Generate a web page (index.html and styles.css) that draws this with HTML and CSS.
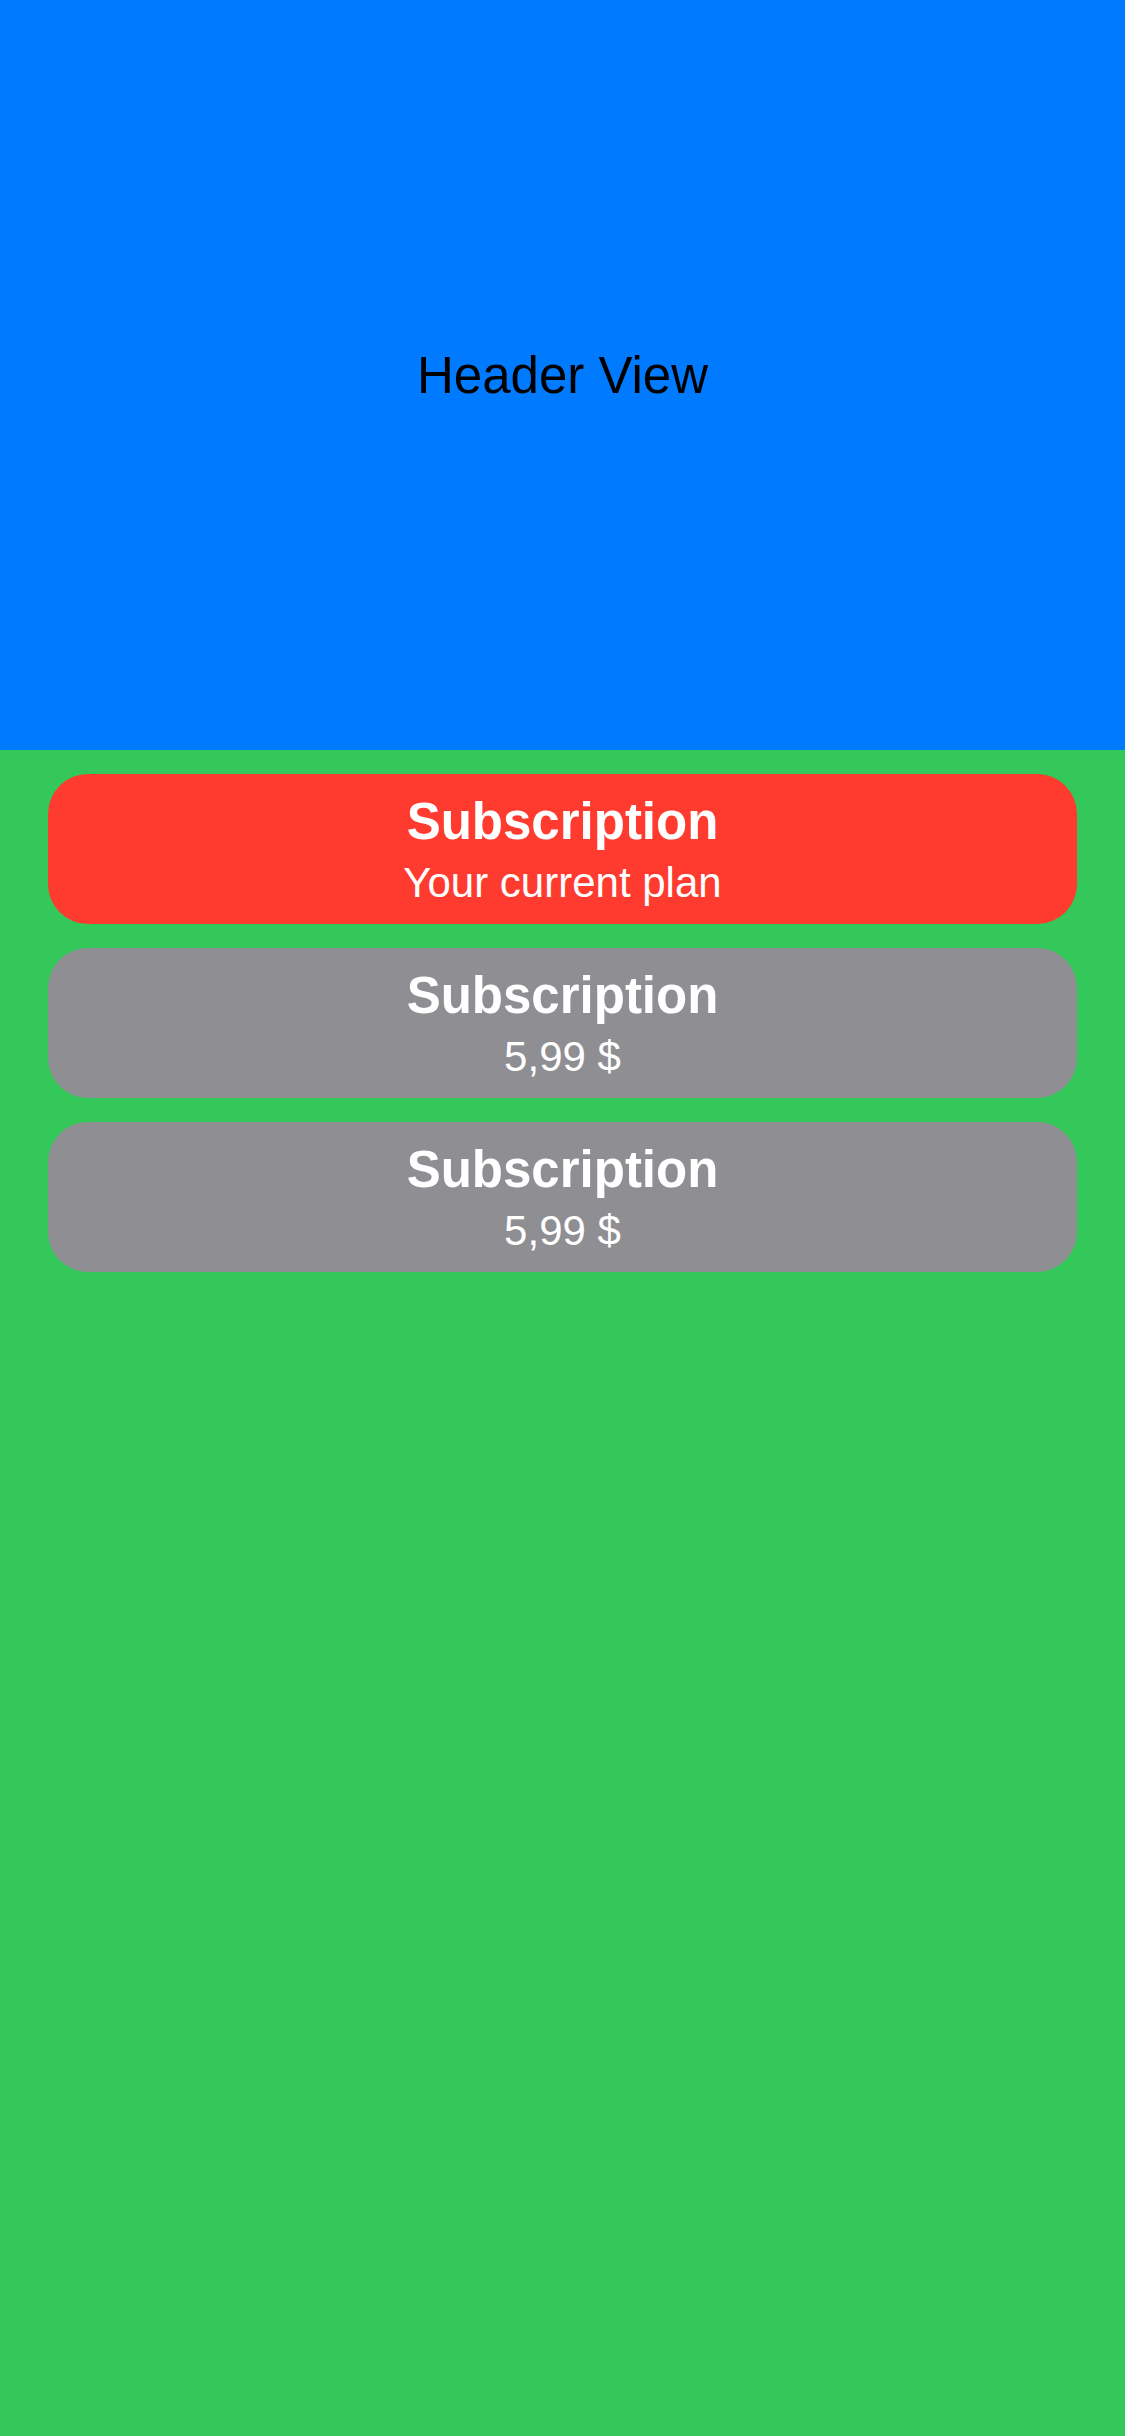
FILE: index.html
```html
<!DOCTYPE html>
<html lang="en">
<head>
<meta charset="utf-8">
<title>Subscriptions</title>
<link rel="stylesheet" href="styles.css">
</head>
<body>
<div class="screen">
  <header class="header">
    <span class="header-title">Header View</span>
  </header>
  <main class="plans">
    <div class="plan plan-current">
      <div class="plan-title">Subscription</div>
      <div class="plan-sub">Your current plan</div>
    </div>
    <div class="plan">
      <div class="plan-title">Subscription</div>
      <div class="plan-sub">5,99 $</div>
    </div>
    <div class="plan">
      <div class="plan-title">Subscription</div>
      <div class="plan-sub">5,99 $</div>
    </div>
  </main>
</div>
</body>
</html>
```
FILE: styles.css
```css
html, body {
  margin: 0;
  padding: 0;
}
body {
  background: #34c759;
  font-family: "Liberation Sans", Arial, sans-serif;
}
.screen {
  width: 1125px;
  min-height: 2436px;
  display: flex;
  flex-direction: column;
  background: #34c759;
}
.header {
  height: 750px;
  background: #007aff;
  display: flex;
  align-items: center;
  justify-content: center;
}
.header-title {
  font-size: 51px;
  color: #000;
}
.plans {
  display: flex;
  flex-direction: column;
  gap: 24px;
  padding: 24px 48px;
}
.plan {
  height: 150px;
  border-radius: 40px;
  background: #8e8e93;
  color: #fff;
  display: flex;
  flex-direction: column;
  align-items: center;
  justify-content: center;
  text-align: center;
}
.plan-current {
  background: #ff3b30;
}
.plan-title {
  font-size: 51px;
  font-weight: 700;
  line-height: 62px;
  margin-top: 6px;
}
.plan-sub {
  font-size: 42px;
  line-height: 60px;
}
```
